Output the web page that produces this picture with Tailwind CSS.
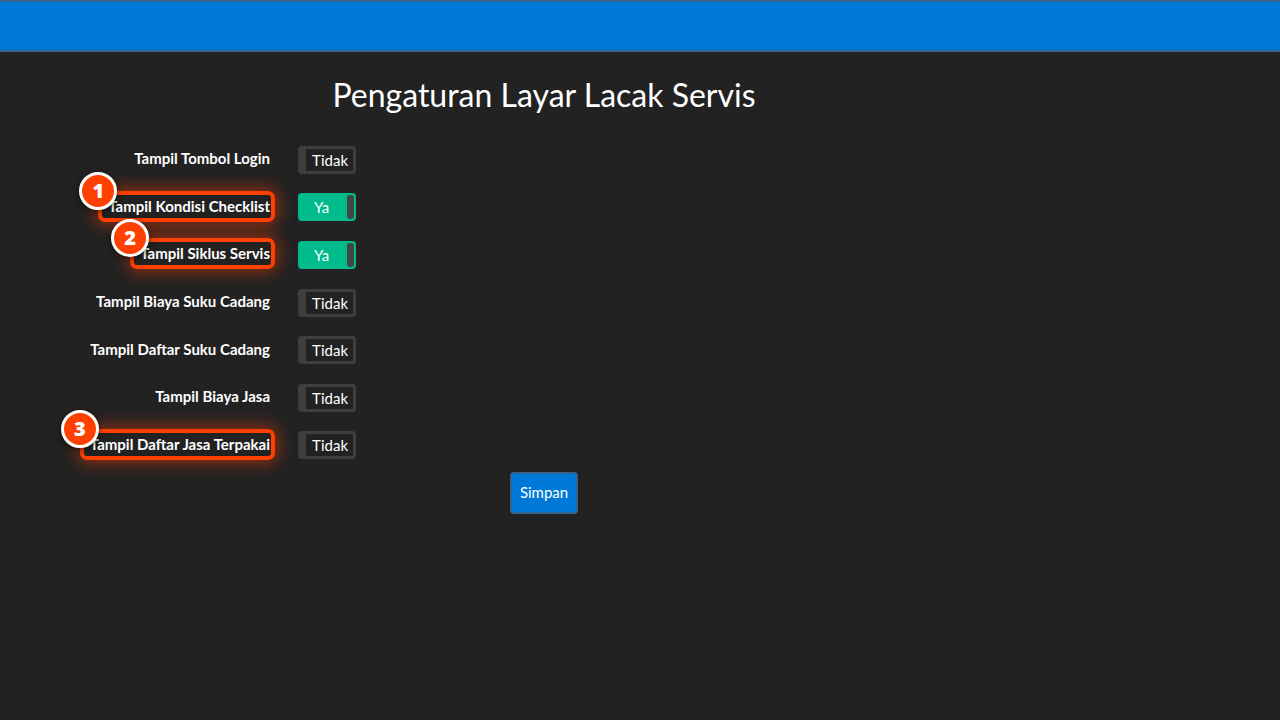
<!DOCTYPE html>
<html lang="id">
<head>
<meta charset="utf-8">
<meta name="viewport" content="width=device-width, initial-scale=1">
<title>Pengaturan Layar Lacak Servis</title>
<script src="https://cdn.jsdelivr.net/npm/@tailwindcss/browser@4"></script>
</head>
<body class="min-h-screen bg-[#222222] font-['Lato','Liberation_Sans',sans-serif] text-[15px] text-white">
<header class="h-[52px] border-y-2 border-[#33658f] bg-[#0078d7]"></header>
<main class="w-[85%]">
  <h1 class="pt-5 text-center text-[32px] leading-[46px]">Pengaturan Layar Lacak Servis</h1>
  <form class="flex flex-col pt-[18px]">
    <div id="rows" class="flex min-h-[333px] flex-col"></div>
    <button type="button" class="mt-[3px] h-[42px] self-center rounded-[4px] border-2 border-[#33658f] bg-[#0078d7] px-2 pb-0.5 text-[15px]">Simpan</button>
  </form>
</main>
<script>
const settings = [
  ["Tampil Tombol Login", false, 0],
  ["Tampil Kondisi Checklist", true, 1],
  ["Tampil Siklus Servis", true, 2],
  ["Tampil Biaya Suku Cadang", false, 0],
  ["Tampil Daftar Suku Cadang", false, 0],
  ["Tampil Biaya Jasa", false, 0],
  ["Tampil Daftar Jasa Terpakai", false, 3]
];
const marker = n => n ? `
  <span class="pointer-events-none absolute -top-1 -right-[5px] -bottom-[5px] -left-[10px] rounded-[7px] border-4 border-[#ff4000] shadow-[0_0_16px_3px_rgba(255,64,0,0.5)]"></span>
  <span class="pointer-events-none absolute -top-[23px] -left-[29px] flex size-[38px] items-center justify-center rounded-full border-[3px] border-white bg-[#ff4000] font-['Noto_Sans',sans-serif] text-[20px] font-black shadow-[0_2px_6px_rgba(0,0,0,0.6)]">${n}</span>` : "";
const on = `<span class="flex h-7 w-[58px] items-center justify-between rounded-[4px] bg-[#00bc8c] pr-0.5 pl-4"><span>Ya</span><span class="h-6 w-[7px] rounded-[3px] bg-[#444444]"></span></span>`;
const off = `<span class="flex h-7 w-[58px] items-center justify-end rounded-[4px] border-3 border-l-8 border-[#3e3e3e] pr-[5px]"><span>Tidak</span></span>`;
document.getElementById("rows").innerHTML = settings.map(([label, checked, n], i) => `
  <div class="flex flex-1 items-center gap-7">
    <div class="flex w-[270px] justify-end">
      <label for="s${i}" class="relative mb-[3px] leading-[22px] font-bold whitespace-nowrap">${label}${marker(n)}</label>
    </div>
    <label class="relative block cursor-pointer leading-5">
      <input id="s${i}" type="checkbox" aria-label="${label}" class="absolute inset-0 size-full cursor-pointer opacity-0" ${checked ? "checked" : ""}>
      ${checked ? on : off}
    </label>
  </div>`).join("");
</script>
</body>
</html>
